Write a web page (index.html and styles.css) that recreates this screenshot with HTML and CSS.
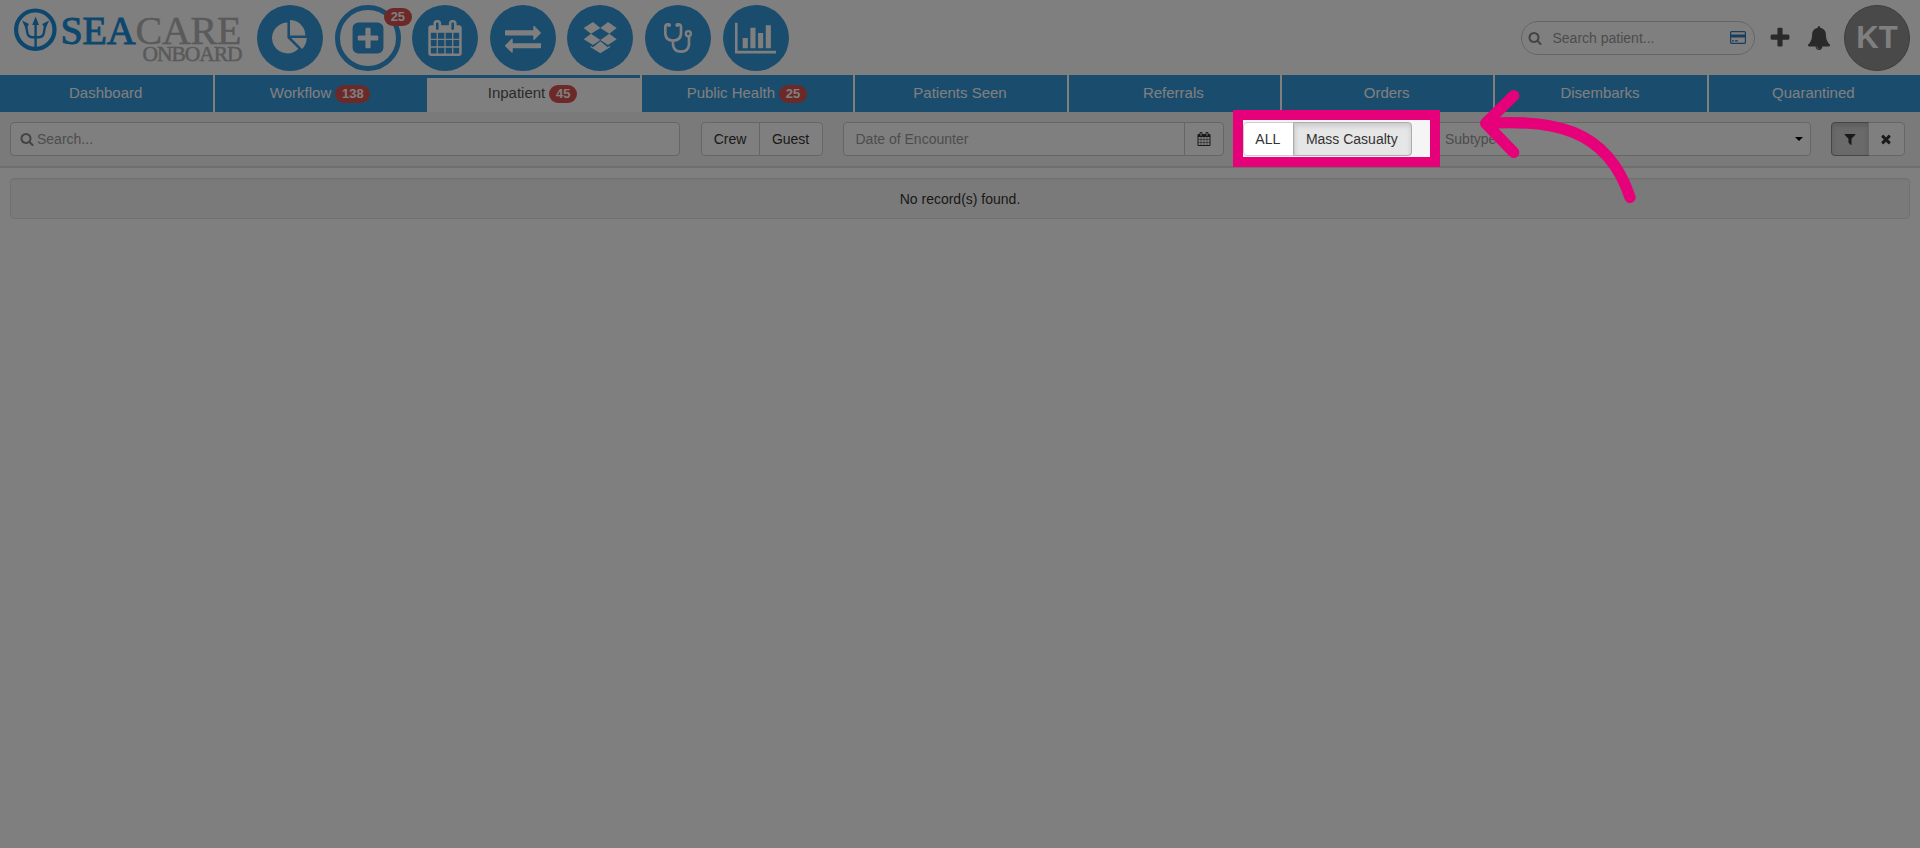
FILE: index.html
```html
<!DOCTYPE html>
<html lang="en">
<head>
<meta charset="utf-8">
<title>SeaCare Onboard</title>
<link rel="stylesheet" href="styles.css">
</head>
<body>
<header class="header">
  <svg class="logo" viewBox="0 0 250 75">
    <circle cx="35.3" cy="29.7" r="19.2" fill="none" stroke="#1a8fdc" stroke-width="4.2"/>
    <path fill="none" stroke="#1a8fdc" stroke-width="2.4" d="M35.600 48V22M25.500 23L27.500 33.500Q28.500 37.200 32 37.200H39.200Q42.700 37.200 43.700 33.500L45.700 23"/>
    <path fill="#1a8fdc" d="M35.600 16.500L39 25H32.200ZM22 20.500L29 24L26 29ZM49.200 20.500L42.200 24L45.200 29Z"/>
    <text class="logo-name" x="60.500" y="44" textLength="181"><tspan class="logo-sea">SEA</tspan>CARE</text>
    <text class="logo-sub" x="142.500" y="61.300" textLength="100">ONBOARD</text>
  </svg>
  <nav class="apps">
    <a class="app"><svg class="glyph" viewBox="0 0 1792 1792"><path d="M768 890l546 546q-106 108-247.500 168t-298.500 60q-209 0-385.500-103t-279.500-279.500-103-385.500 103-385.500 279.500-279.500 385.500-103v762zm187 6h773q0 157-60 298.500t-168 247.500zm709-128h-768v-768q209 0 385.500 103t279.500 279.500 103 385.500z"/></svg></a>
    <a class="app current"><svg class="glyph" viewBox="0 0 1792 1792"><path d="M1408 960v-128q0-26-19-45t-45-19h-320v-320q0-26-19-45t-45-19h-128q-26 0-45 19t-19 45v320h-320q-26 0-45 19t-19 45v128q0 26 19 45t45 19h320v320q0 26 19 45t45 19h128q26 0 45-19t19-45v-320h320q26 0 45-19t19-45zm256-544v960q0 119-84.500 203.500t-203.500 84.500h-960q-119 0-203.500-84.500t-84.500-203.500v-960q0-119 84.500-203.500t203.500-84.500h960q119 0 203.500 84.500t84.500 203.500z"/></svg><span class="badge app-badge">25</span></a>
    <a class="app"><svg class="glyph" viewBox="0 0 1792 1792"><path d="M192 1664h288v-288h-288v288zm352 0h320v-288h-320v288zm-352-352h288v-320h-288v320zm352 0h320v-320h-320v320zm-352-384h288v-288h-288v288zm736 736h320v-288h-320v288zm-384-736h320v-288h-320v288zm768 736h288v-288h-288v288zm-384-352h320v-320h-320v320zm-352-864v-288q0-13-9.500-22.500t-22.500-9.500h-64q-13 0-22.500 9.500t-9.500 22.500v288q0 13 9.500 22.500t22.500 9.500h64q13 0 22.500-9.500t9.500-22.500zm736 864h288v-320h-288v320zm-384-384h320v-288h-320v288zm384 0h288v-288h-288v288zm32-480v-288q0-13-9.500-22.500t-22.500-9.500h-64q-13 0-22.500 9.500t-9.500 22.500v288q0 13 9.500 22.500t22.500 9.500h64q13 0 22.500-9.500t9.500-22.500zm384-64v1280q0 52-38 90t-90 38h-1408q-52 0-90-38t-38-90v-1280q0-52 38-90t90-38h128v-96q0-66 47-113t113-47h64q66 0 113 47t47 113v96h384v-96q0-66 47-113t113-47h64q66 0 113 47t47 113v96h128q52 0 90 38t38 90z"/></svg></a>
    <a class="app"><svg class="glyph" viewBox="0 0 1792 1792"><path d="M1792 1184v192q0 13-9.500 22.500t-22.500 9.500h-1376v192q0 13-9.500 22.500t-22.500 9.500q-12 0-24-10l-319-320q-9-9-9-22 0-14 9-23l320-320q9-9 23-9 13 0 22.500 9.500t9.500 22.500v192h1376q13 0 22.500 9.500t9.500 22.500zm0-544q0 14-9 23l-320 320q-9 9-23 9-13 0-22.500-9.500t-9.500-22.500v-192h-1376q-13 0-22.500-9.500t-9.500-22.500v-192q0-13 9.500-22.500t22.500-9.500h1376v-192q0-14 9-23t23-9q12 0 24 10l319 319q9 9 9 23z"/></svg></a>
    <a class="app"><svg class="glyph full" viewBox="262 15 198 198"><path d="M340 66L362 84L334 101L312 84ZM385 66L411 84L389 101L362 84ZM334 101L362 120L340 135L312 118ZM389 101L411 118L385 135L362 120ZM362 124L384 142L391 137V142L362 160L333 142V137L340 142Z"/></svg></a>
    <a class="app"><svg class="glyph full" viewBox="495 15 198 198"><g fill="none" stroke="#fff" stroke-width="8"><path d="M568 74Q556 71 556 81V102Q558 121 579 122Q601 121 603 102V81Q603 71 591 74M579 122V134Q581 155 603 155Q625 155 627 134V110"/><circle cx="625" cy="101" r="7.500" stroke-width="7"/></g><circle cx="567" cy="75" r="6"/><circle cx="592" cy="75" r="6"/></svg></a>
    <a class="app"><svg class="glyph wide" viewBox="0 0 2048 1792"><path d="M640 896v512h-256v-512h256zm384-512v1024h-256v-1024h256zm1024 1152v128h-2048v-1536h128v1408h1920zm-640-896v768h-256v-768h256zm384-384v1152h-256v-1152h256z"/></svg></a>
  </nav>
  <div class="tools">
    <div class="patient-search">
      <svg class="i14" viewBox="0 0 1792 1792"><use href="#search"/></svg>
      <span class="patient-hint">Search patient...</span>
      <svg class="card" viewBox="0 0 16 13"><rect x=".6" y=".6" width="14.800" height="11.800" rx="1" fill="none" stroke="#337ab7" stroke-width="1.200"/><path d="M0 3.500H16V6.500H0ZM2 9.300H4V10.500H2ZM5 9.300H8V10.500H5Z" fill="#337ab7"/></svg>
    </div>
    <svg class="i24 add" viewBox="0 0 1792 1792"><path d="M1600 736v192q0 40-28 68t-68 28h-416v416q0 40-28 68t-68 28h-192q-40 0-68-28t-28-68v-416h-416q-40 0-68-28t-28-68v-192q0-40 28-68t68-28h416v-416q0-40 28-68t68-28h192q40 0 68 28t28 68v416h416q40 0 68 28t28 68z"/></svg>
    <svg class="i24 bell" viewBox="0 0 1792 1792"><path d="M912 1696q0-16-16-16-59 0-101.500-42.500t-42.500-101.500q0-16-16-16t-16 16q0 73 51.500 124.500t124.500 51.500q16 0 16-16zm816-288q0 52-38 90t-90 38h-448q0 106-75 181t-181 75-181-75-75-181h-448q-52 0-90-38t-38-90q50-42 91-88t85-119.500 74.500-158.500 50-206 19.500-260q0-152 117-282.500t307-158.500q-8-19-8-39 0-40 28-68t68-28 68 28 28 68q0 20-8 39 190 28 307 158.500t117 282.500q0 139 19.500 260t50 206 74.500 158.500 85 119.500 91 88z"/></svg>
    <div class="avatar">KT</div>
  </div>
</header>

<nav class="tabs">
  <a class="tab">Dashboard</a>
  <a class="tab">Workflow <span class="badge">138</span></a>
  <a class="tab active">Inpatient <span class="badge">45</span></a>
  <a class="tab">Public Health <span class="badge">25</span></a>
  <a class="tab">Patients Seen</a>
  <a class="tab">Referrals</a>
  <a class="tab">Orders</a>
  <a class="tab">Disembarks</a>
  <a class="tab">Quarantined</a>
</nav>

<section class="filters">
  <div class="field search-field"><svg class="i14" viewBox="0 0 1792 1792"><path id="search" d="M1216 832q0-185-131.500-316.500t-316.500-131.500-316.500 131.500-131.500 316.500 131.500 316.500 316.500 131.500 316.500-131.500 131.500-316.500zm512 832q0 52-38 90t-90 38q-54 0-90-38l-343-342q-179 124-399 124-143 0-273.500-55.500t-225-150-150-225-55.500-273.500 55.500-273.500 150-225 225-150 273.500-55.500 273.500 55.500 225 150 150 225 55.500 273.500q0 220-124 399l343 343q37 37 37 90z"/></svg><span>Search...</span></div>
  <div class="group who"><span class="btn">Crew</span><span class="btn">Guest</span></div>
  <div class="group date"><span class="date-text">Date of Encounter</span><span class="btn addon"><svg class="i14" viewBox="0 0 1792 1792"><path d="M192 1664h288v-288h-288v288zm352 0h320v-288h-320v288zm-352-352h288v-320h-288v320zm352 0h320v-320h-320v320zm-352-384h288v-288h-288v288zm736 736h320v-288h-320v288zm-384-736h320v-288h-320v288zm768 736h288v-288h-288v288zm-384-352h320v-320h-320v320zm-352-864v-288q0-13-9.500-22.500t-22.500-9.500h-64q-13 0-22.500 9.500t-9.500 22.500v288q0 13 9.500 22.500t22.500 9.500h64q13 0 22.500-9.500t9.500-22.500zm736 864h288v-320h-288v320zm-384-384h320v-288h-320v288zm384 0h288v-288h-288v288zm32-480v-288q0-13-9.500-22.500t-22.500-9.500h-64q-13 0-22.500 9.500t-9.500 22.500v288q0 13 9.500 22.500t22.500 9.500h64q13 0 22.500-9.500t9.500-22.500zm384-64v1280q0 52-38 90t-90 38h-1408q-52 0-90-38t-38-90v-1280q0-52 38-90t90-38h128v-96q0-66 47-113t113-47h64q66 0 113 47t47 113v96h384v-96q0-66 47-113t113-47h64q66 0 113 47t47 113v96h128q52 0 90 38t38 90z"/></svg></span></div>
  <div class="group type"><span class="btn">ALL</span><span class="btn pressed">Mass Casualty</span></div>
  <div class="field subtype"><span>Subtype</span><i class="caret"></i></div>
  <div class="group actions">
    <span class="btn pressed"><svg class="i14" viewBox="0 0 1792 1792"><path d="M1595 295q17 41-14 70l-493 493v742q0 42-39 59-13 5-25 5-27 0-45-19l-256-256q-19-19-19-45v-486l-493-493q-31-29-14-70 17-39 59-39h1280q42 0 59 39z"/></svg></span>
    <span class="btn"><svg class="i14" viewBox="0 0 1792 1792"><path d="M1490 1322q0 40-28 68l-136 136q-28 28-68 28t-68-28l-294-294-294 294q-28 28-68 28t-68-28l-136-136q-28-28-28-68t28-68l294-294-294-294q-28-28-28-68t28-68l136-136q28-28 68-28t68 28l294 294 294-294q28-28 68-28t68 28l136 136q28 28 28 68t-28 68l-294 294 294 294q28 28 28 68z"/></svg></span>
  </div>
</section>

<main class="results"><div class="empty">No record(s) found.</div></main>

<div class="spotlight"></div>
<svg class="pointer" viewBox="0 0 540 420"><path d="M221 47L137 130L221 217M137 130C330 118 500 140 570 352"/></svg>
</body>
</html>
```

FILE: styles.css
```css
* { box-sizing: border-box; }
body {
  margin: 0;
  height: 848px;
  overflow: hidden;
  position: relative;
  background: #fff;
  color: #333;
  font: 14px/20px "Liberation Sans", Arial, sans-serif;
}
svg { display: block; flex: none; }

/* header */
.header { display: flex; height: 75px; }
.logo { width: 250px; height: 75px; margin-right: 7px; }
.logo-name, .logo-sub {
  font-family: "Liberation Serif", "Times New Roman", serif;
  fill: #b4b4b4;
  stroke: #b4b4b4;
  stroke-width: .5px;
}
.logo-name { font-size: 40px; }
.logo-sea { fill: #1a8fdc; stroke: #1a8fdc; stroke-width: 1px; }
.logo-sub { font-size: 21.500px; }
.apps { display: flex; gap: 11.600px; padding-top: 5px; }
.app {
  position: relative;
  display: flex;
  align-items: center;
  justify-content: center;
  width: 66px;
  height: 66px;
  border-radius: 50%;
  background: #3498db;
}
.app.current { background: #fff; border: 5px solid #3498db; }
.glyph { width: 36px; height: 36px; fill: #fff; }
.glyph.full { width: 66px; height: 66px; }
.glyph.wide { width: 41px; }
.current .glyph { fill: #3498db; }
.badge {
  display: inline-block;
  padding: 3px 6.500px;
  border-radius: 10px;
  background: #d9534f;
  color: #fff;
  font-size: 13px;
  font-weight: bold;
  line-height: 12px;
}
.app-badge { position: absolute; top: -2px; right: -16px; }
.tools { display: flex; align-items: center; margin-left: auto; padding-right: 10px; }
.patient-search {
  display: flex;
  align-items: center;
  width: 234px;
  height: 34px;
  padding: 0 8px 0 6px;
  border: 1px solid #ccc;
  border-radius: 17px;
  color: #999;
}
.patient-search .i14 { fill: #888; }
.patient-hint { margin: 0 auto 0 11px; }
.card { width: 16px; height: 13px; }
.i14 { width: 14px; height: 14px; fill: #333; }
.i24 { width: 24px; height: 24px; fill: #555; }
.add { margin-left: 13.500px; }
.bell { margin-left: 14.500px; margin-top: 1px; }
.avatar {
  width: 66px;
  height: 66px;
  margin-left: 13.500px;
  border: 1px solid #7c7c7c;
  border-radius: 50%;
  background: #939393;
  color: #fff;
  font-size: 31px;
  font-weight: bold;
  line-height: 64px;
  text-align: center;
}

/* tabs */
.tabs { display: grid; grid-template-columns: repeat(9, 1fr); height: 37px; }
.tab {
  padding: 4px 2px 0 0;
  border-top: 3px solid #3498db;
  border-left: 2px solid #fff;
  background: #3498db;
  color: #fff;
  font-size: 15px;
  line-height: 21px;
  text-align: center;
}
.tab:not(.active) { border-top: 0; padding-top: 7px; }
.tab:first-child { border-left: 0; }
.tab.active { background: #fff; border-left: 0; color: #555; }

/* filter bar */
.filters {
  display: flex;
  height: 56px;
  padding: 10px;
  background: #f5f5f5;
  border-bottom: 2px solid #ddd;
}
.field, .group {
  display: flex;
  height: 34px;
  border: 1px solid #ccc;
  border-radius: 4px;
  background: #fff;
}
.field { align-items: center; color: #999; }
.search-field { width: 670px; padding-left: 8.500px; gap: 3.500px; }
.search-field .i14 { fill: #888; }
.who { width: 122px; margin-left: 20.500px; }
.btn { display: flex; align-items: center; justify-content: center; flex: 1 1 auto; }
.btn + .btn, .addon { border-left: 1px solid #ccc; }
.date { width: 381px; margin-left: 20px; }
.date-text { flex: 1; padding: 6px 12px; color: #999; }
.addon { flex: 0 0 39px; }
.type { width: 169px; margin-left: 19.500px; }
.type .btn { padding-right: 2px; }
.pressed { background: #e6e6e6; box-shadow: inset 0 3px 5px rgba(0, 0, 0, .125); outline: 1px solid #adadad; border-radius: 0 3px 3px 0; }
.subtype { width: 379px; margin-left: 20px; padding: 0 7px 0 12px; justify-content: space-between; }
.caret { border: 4px solid transparent; border-top: 4px solid #000; border-bottom: 0; }
.actions { width: 74px; margin-left: 20px; }
.actions .pressed { background: #d4d4d4; border-radius: 3px 0 0 3px; outline-color: #8c8c8c; }
.results { padding: 10px; }
.empty {
  height: 41px;
  padding-top: 9.500px;
  border: 1px solid #e3e3e3;
  border-radius: 4px;
  background: #f5f5f5;
  box-shadow: inset 0 1px 1px rgba(0, 0, 0, .05);
  text-align: center;
}

/* guided-tour highlight over the page */
.spotlight {
  position: absolute;
  left: 1233px;
  top: 110px;
  width: 207px;
  height: 57px;
  border: 10px solid #e6007a;
  box-shadow: 0 0 0 2000px rgba(0, 0, 0, .5);
}
.pointer {
  position: absolute;
  left: 1440px;
  top: 80px;
  width: 180px;
  height: 140px;
  overflow: visible;
  fill: none;
  stroke: #e6007a;
  stroke-width: 34;
  stroke-linecap: round;
  stroke-linejoin: round;
}
```
